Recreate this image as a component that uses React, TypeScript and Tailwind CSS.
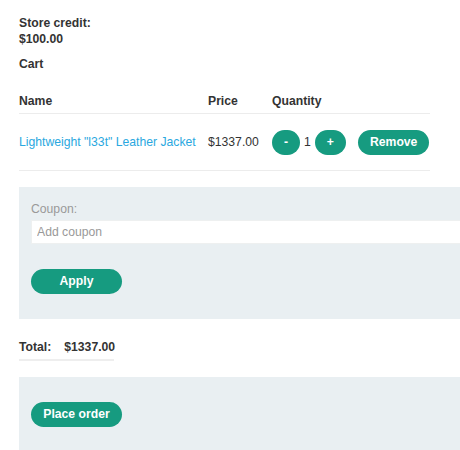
import React from "react";

const font = { fontFamily: '"Liberation Sans", Arial, sans-serif' };

const PillButton = ({
  children,
  className = "",
}: {
  children: React.ReactNode;
  className?: string;
}) => (
  <button
    className={`h-[25px] rounded-full bg-[#169b80] px-3 text-[12.2px] font-bold leading-[25px] text-white ${className}`}
  >
    {children}
  </button>
);

export default function App() {
  return (
    <div
      className="w-[460px] h-[450px] overflow-hidden bg-white text-[12.2px] leading-[16px] text-[#333]"
      style={font}
    >
      <div className="pl-[19px] pt-[15px]">
        <p className="font-bold">Store credit:</p>
        <p className="font-bold">$100.00</p>
        <h2 className="mt-[9px] font-bold">Cart</h2>

        {/* cart table */}
        <div className="mt-[21px] w-[411px]">
          <div className="flex border-b border-[#ececec] pb-[4px] font-bold">
            <div className="w-[189px]">Name</div>
            <div className="w-[64px]">Price</div>
            <div>Quantity</div>
          </div>
          <div className="flex h-[57px] items-center border-b border-[#ececec]">
            <a href="#" className="w-[189px] text-[#2aa8e0]">
              Lightweight "l33t" Leather Jacket
            </a>
            <div className="w-[64px]">$1337.00</div>
            <div className="flex items-center">
              <PillButton>-</PillButton>
              <span className="mx-[4px]">1</span>
              <PillButton>+</PillButton>
              <PillButton className="ml-[12px]">Remove</PillButton>
            </div>
          </div>
        </div>

        {/* coupon */}
        <div className="mt-[16px] w-[600px] bg-[#e9eff2] px-[12px] pt-[14px] pb-[25px]">
          <label className="block text-[#999]">Coupon:</label>
          <input
            className="mt-[3px] block h-[24px] w-[560px] border border-[#eef0f0] bg-white px-[5px] text-[12.2px] outline-none placeholder:text-[#999]"
            placeholder="Add coupon"
          />
          <PillButton className="mt-[25px] block w-[91px]">Apply</PillButton>
        </div>

        {/* total */}
        <div className="mt-[20px] flex w-[95px] border-b-2 border-[#eeeeee] pb-[4px] font-bold">
          <span>Total:</span>
          <span className="ml-[13px]">$1337.00</span>
        </div>

        <div className="mt-[16px] w-[600px] bg-[#e9eff2] px-[12px] py-[25px]">
          <PillButton className="block w-[91px]">Place order</PillButton>
        </div>
      </div>
    </div>
  );
}
